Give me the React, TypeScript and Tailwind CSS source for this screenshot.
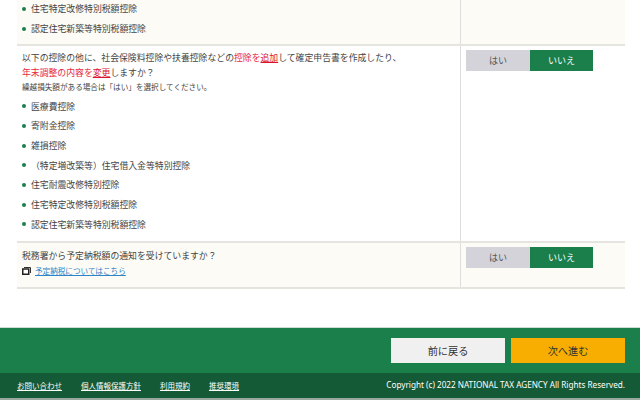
const font = "[font-family:'Noto_Sans_CJK_JP','Liberation_Sans',sans-serif]";

function Deduction({ label }: { label: string }) {
  return (
    <li className="flex h-[19.7px] items-center">
      <span className="ml-[5px] mr-[5px] h-[4px] w-[4px] rounded-full bg-[#1a7f4b]" />
      <span>{label}</span>
    </li>
  );
}

function YesNo() {
  return (
    <div className="flex h-[21px] w-[127px] text-[9px] leading-[21px]">
      <div className="w-[64px] bg-[#d3d3d9] text-center text-[#555]">はい</div>
      <div className="w-[63px] bg-[#1a7f4b] text-center text-white">いいえ</div>
    </div>
  );
}

const added = [
  '医療費控除',
  '寄附金控除',
  '雑損控除',
  '（特定増改築等）住宅借入金等特別控除',
  '住宅耐震改修特別控除',
  '住宅特定改修特別税額控除',
  '認定住宅新築等特別税額控除',
];

export default function App() {
  return (
    <div className={`flex h-[400px] w-[640px] flex-col overflow-hidden bg-white text-[8.85px] text-[#444] ${font}`}>
      <main className="mx-[17px] h-[327px] w-[608px]">
        {/* cropped row */}
        <div className="flex h-[46px] border-b-2 border-[#e6e4df] bg-[#fdfbf5]">
          <ul className="-mt-[1px] w-[444px] border-r border-[#dedede]">
            <Deduction label="住宅特定改修特別税額控除" />
            <Deduction label="認定住宅新築等特別税額控除" />
          </ul>
        </div>

        <div className="flex h-[197px] border-b-2 border-[#e6e4df]">
          <div className="w-[444px] border-r border-[#dedede] pl-[5px] pt-[4px]">
            <p className="h-[15px] leading-[15px]">
              以下の控除の他に、社会保険料控除や扶養控除などの
              <span className="text-[#e8293f]">控除を<b className="font-normal text-[#d9142b] underline">追加</b></span>
              して確定申告書を作成したり、
            </p>
            <p className="h-[15px] leading-[15px]">
              <span className="text-[#e8293f]">年末調整の内容を<b className="font-normal text-[#d9142b] underline">変更</b></span>
              しますか？
            </p>
            <p className="h-[13px] text-[7.6px] leading-[13px]">
              繰越損失額がある場合は「はい」を選択してください。
            </p>
            <ul className="-ml-[5px] mt-[3.5px]">
              {added.map((label) => (
                <Deduction key={label} label={label} />
              ))}
            </ul>
          </div>
          <div className="pl-[5px] pt-[4px]">
            <YesNo />
          </div>
        </div>

        <div className="flex h-[46px] border-b-2 border-[#e6e4df] bg-[#fdfbf5]">
          <div className="w-[444px] border-r border-[#dedede] pl-[5px] pt-[5px]">
            <p className="h-[15px] leading-[15px]">税務署から予定納税額の通知を受けていますか？</p>
            <p className="flex h-[15px] items-center">
              <svg width="9" height="8" viewBox="0 0 9 8" className="mr-[4px]">
                <path d="M2 0.5h6.5v5.5" fill="none" stroke="#333" />
                <rect x="0.75" y="2" width="6" height="5.25" fill="#fff" stroke="#222" strokeWidth="1.5" />
              </svg>
              <a className="text-[7.6px] text-[#2b83c9] underline">予定納税についてはこちら</a>
            </p>
          </div>
          <div className="pl-[5px] pt-[4px]">
            <YesNo />
          </div>
        </div>
      </main>

      <footer className="border-t border-[#cfdcd4]">
        <div className="flex h-[45px] items-start justify-end gap-[6px] bg-[#1a7f4b] pr-[15px] pt-[10px]">
          <button className="h-[25px] w-[114px] bg-[#f0f0f0] text-[10.2px] text-[#333]">前に戻る</button>
          <button className="h-[25px] w-[114px] bg-[#f8ae00] text-[10.2px] text-[#333]">次へ進む</button>
        </div>
        <div className="flex h-[27px] items-center justify-between border-b-2 border-[#9aa8a0] bg-[#155a36] pl-[17px] pr-[15px] text-[7.5px] text-white">
          <nav className="flex gap-[19px]">
            <a className="underline">お問い合わせ</a>
            <a className="underline">個人情報保護方針</a>
            <a className="underline">利用規約</a>
            <a className="underline">推奨環境</a>
          </nav>
          <span className="font-['Noto_Sans'] text-[8.17px]">Copyright (c) 2022 NATIONAL TAX AGENCY All Rights Reserved.</span>
        </div>
      </footer>
    </div>
  );
}
